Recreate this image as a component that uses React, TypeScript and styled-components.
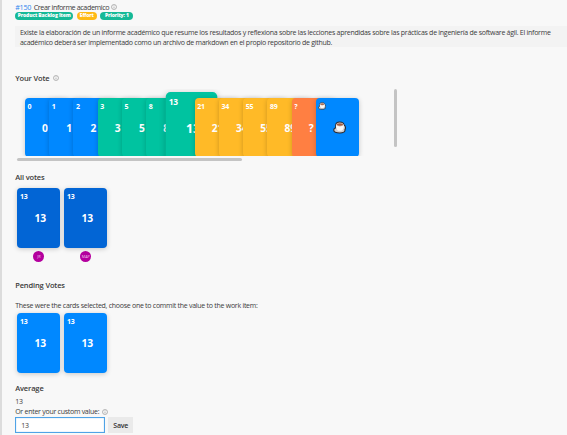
import React from "react";
import styled, { createGlobalStyle } from "styled-components";

const GlobalStyle = createGlobalStyle`
  * { box-sizing: border-box; }
  body {
    margin: 0;
    background: #f8f8f8;
    color: #3b3b3b;
    font-family: "Open Sans", "Noto Sans", sans-serif;
    font-size: 7px;
    line-height: 10px;
    overflow: hidden;
  }
`;

const Page = styled.main`
  width: 567px;
  height: 435px;
  padding: 2px 0 0 13.2px;
  border-left: 2px solid #dcdcdc;
  background: #f8f8f8;
  overflow: hidden;
`;

const TitleRow = styled.header`
  display: flex;
  align-items: center;
  height: 10px;
  font-size: 7.2px;
  white-space: nowrap;
`;

const ItemLink = styled.a`
  width: 18.5px;
  color: #2f86ee;
  letter-spacing: -0.25px;
`;

const ItemTitle = styled.span`
  width: 77px;
  letter-spacing: -0.41px;
`;

const Tags = styled.div`
  display: flex;
  gap: 3.6px;
  height: 7px;
`;

const Tag = styled.span<{ $width: number; $color: string }>`
  width: ${(p) => p.$width}px;
  height: 7.5px;
  border-radius: 4px;
  background: ${(p) => p.$color};
  color: #fff;
  font-size: 5px;
  font-weight: 800;
  line-height: 7px;
  letter-spacing: -0.12px;
  text-align: center;
  white-space: nowrap;
`;

const Description = styled.p`
  width: 551.8px;
  height: 21px;
  margin: 7px 0 0;
  padding: 1.5px 0 0 4.8px;
  background: #f3f3f3;
  white-space: nowrap;
`;

const Line = styled.span`
  display: block;
  letter-spacing: -0.27px;
`;

const Heading = styled.h2<{ $top: number }>`
  display: flex;
  align-items: center;
  gap: 4px;
  height: 10px;
  margin: ${(p) => p.$top}px 0 0;
  font-size: 7.5px;
  font-weight: 600;
  line-height: 10px;
  letter-spacing: -0.14px;
`;

const VoteArea = styled.section`
  display: flex;
  justify-content: space-between;
  width: 381.5px;
  height: 78px;
  margin-top: 6px;
`;

const HandScroller = styled.div`
  width: 350px;
  height: 73px;
`;

const Hand = styled.div`
  display: flex;
  height: 67px;
  padding: 8.5px 0 0 9.8px;
  overflow: hidden;
`;

const HandSlot = styled.div`
  flex: 0 0 24.25px;
  min-width: 0;
`;

const HorizontalThumb = styled.div`
  width: 225px;
  height: 3px;
  margin: 2px 0 0 2px;
  border-radius: 2px;
  background: #c4c4c4;
`;

const VerticalThumb = styled.div`
  width: 3px;
  height: 58px;
  border-radius: 2px;
  background: #c4c4c4;
`;

const CardBox = styled.div<{ $color: string; $raised?: boolean }>`
  position: relative;
  flex-shrink: 0;
  width: 42.8px;
  height: 59.5px;
  padding: 4px 0 0 2.5px;
  border-radius: 4px;
  background: ${(p) => p.$color};
  box-shadow: 0 1px 5px rgba(0, 0, 0, 0.2);
  color: #fff;
  font-weight: 700;
  transform: ${(p) => (p.$raised ? "scale(1.2)" : "none")};
`;

const Corner = styled.div`
  height: 9px;
  font-size: 7px;
  line-height: 9px;
  letter-spacing: -0.3px;
`;

const Center = styled.div`
  height: 14px;
  margin: 10px 0 0 14.5px;
  font-size: 10.3px;
  line-height: 14px;
  letter-spacing: -0.2px;
`;

const Results = styled.div<{ $top: number }>`
  display: flex;
  height: 59px;
  gap: 4.2px;
  margin: ${(p) => p.$top}px 0 0 2.3px;
`;

const VotedResults = styled(Results)`
  height: 74px;
`;

const Vote = styled.div`
  display: flex;
  flex-direction: column;
  align-items: center;
  gap: 3.5px;
`;

const Avatar = styled.span`
  flex: 0 0 11px;
  width: 11px;
  border-radius: 50%;
  background: #b4009e;
  color: #f0c5ea;
  font-size: 3.8px;
  line-height: 11px;
  text-align: center;
`;

const Text = styled.p<{ $top: number }>`
  display: flex;
  align-items: center;
  gap: 3px;
  height: 10px;
  margin: ${(p) => p.$top}px 0 0;
  letter-spacing: -0.27px;
  white-space: nowrap;
`;

const Form = styled.form`
  display: flex;
  gap: 3px;
  height: 16px;
`;

const ValueInput = styled.input`
  width: 90px;
  height: 16px;
  padding: 0 5px;
  border: 1px solid #4fa3e6;
  outline: none;
  box-shadow: inset 0 0 1px #4fa3e6;
  background: #fff;
  color: #3b3b3b;
  font: 7px "Open Sans", sans-serif;
  letter-spacing: -0.26px;
`;

const SaveButton = styled.button`
  width: 25px;
  height: 16px;
  padding: 0;
  border: 0;
  background: #eaeaea;
  color: #333;
  font: 600 7px "Open Sans", sans-serif;
  letter-spacing: -0.2px;
`;

const InfoIcon = () => (
  <svg width="6" height="6" viewBox="0 0 12 12" fill="none" stroke="#777">
    <circle cx="6" cy="6" r="5" />
    <path d="M6 5.2v3.5M6 3v1" />
  </svg>
);

const CupIcon = ({ size }: { size: number }) => (
  <svg width={size} height={size} viewBox="0 0 24 24" stroke="#29282c" strokeWidth="2" strokeLinejoin="round" display="block">
    <path d="M5 8C5 3.500 8 2 12.500 2S20 3.500 20.500 8c3 1 3 6 1.500 8 1 4-3 6-9.500 6S1 20.500 1.500 16.500C1.500 14 3 13 5 13z" fill="#cfcfd2" />
    <path d="M5.500 7c0 6 1 9 4 11h6c4-2 4.500-5 4.500-11z" fill="#fafafa" stroke="none" />
    <ellipse cx="12.700" cy="6.500" rx="6.300" ry="3" fill="#a35c3f" stroke="#e6dedc" strokeWidth="1" />
  </svg>
);

const BLUE = "#0088ff";
const DARK_BLUE = "#0265d5";
const GREEN = "#00c3a0";
const AMBER = "#ffba27";
const ORANGE = "#ff7f42";

const deck = [
  { value: "0", color: BLUE },
  { value: "1", color: BLUE },
  { value: "2", color: BLUE },
  { value: "3", color: GREEN },
  { value: "5", color: GREEN },
  { value: "8", color: GREEN },
  { value: "13", color: GREEN },
  { value: "21", color: AMBER },
  { value: "34", color: AMBER },
  { value: "55", color: AMBER },
  { value: "89", color: AMBER },
  { value: "?", color: ORANGE },
  { value: "coffee", color: BLUE },
];

type CardProps = { value: string; color: string; raised?: boolean };

const Card = ({ value, color, raised }: CardProps) => (
  <CardBox $color={color} $raised={raised}>
    <Corner>{value === "coffee" ? <CupIcon size={8} /> : value}</Corner>
    <Center>{value === "coffee" ? <CupIcon size={13} /> : value}</Center>
  </CardBox>
);

export default function App() {
  return (
    <>
      <GlobalStyle />
      <Page>
        <TitleRow>
          <ItemLink>#150</ItemLink>
          <ItemTitle>Crear informe academico</ItemTitle>
          <InfoIcon />
        </TitleRow>
        <Tags>
          <Tag $width={58} $color="#16b997">Product Backlog Item</Tag>
          <Tag $width={20} $color="#ffb914">Effort</Tag>
          <Tag $width={33} $color="#16b997">Priority: 1</Tag>
        </Tags>
        <Description>
          <Line>
            Existe la elaboración de un informe académico que resume los resultados y reflexiona sobre las lecciones aprendidas sobre las prácticas de ingeniería de software ágil. El informe
          </Line>
          <Line>académico deberá ser implementado como un archivo de markdown en el propio repositorio de github.</Line>
        </Description>
        <Heading $top={26}>
          Your Vote <InfoIcon />
        </Heading>
        <VoteArea>
          <HandScroller>
            <Hand>
              {deck.map((card) => (
                <HandSlot key={card.value}>
                  <Card value={card.value} color={card.color} raised={card.value === "13"} />
                </HandSlot>
              ))}
            </Hand>
            <HorizontalThumb />
          </HandScroller>
          <VerticalThumb />
        </VoteArea>
        <Heading $top={5}>All votes</Heading>
        <VotedResults $top={6}>
          {["JR", "MAP"].map((initials) => (
            <Vote key={initials}>
              <Card value="13" color={DARK_BLUE} />
              <Avatar>{initials}</Avatar>
            </Vote>
          ))}
        </VotedResults>
        <Heading $top={18}>Pending Votes</Heading>
        <Text $top={11}>These were the cards selected, choose one to commit the value to the work item:</Text>
        <Results $top={2}>
          <Card value="13" color={BLUE} />
          <Card value="13" color={BLUE} />
        </Results>
        <Heading $top={11}>Average</Heading>
        <Text $top={4}>13</Text>
        <Text $top={0}>
          Or enter your custom value: <InfoIcon />
        </Text>
        <Form onSubmit={(event) => event.preventDefault()}>
          <ValueInput defaultValue="13" />
          <SaveButton>Save</SaveButton>
        </Form>
      </Page>
    </>
  );
}
